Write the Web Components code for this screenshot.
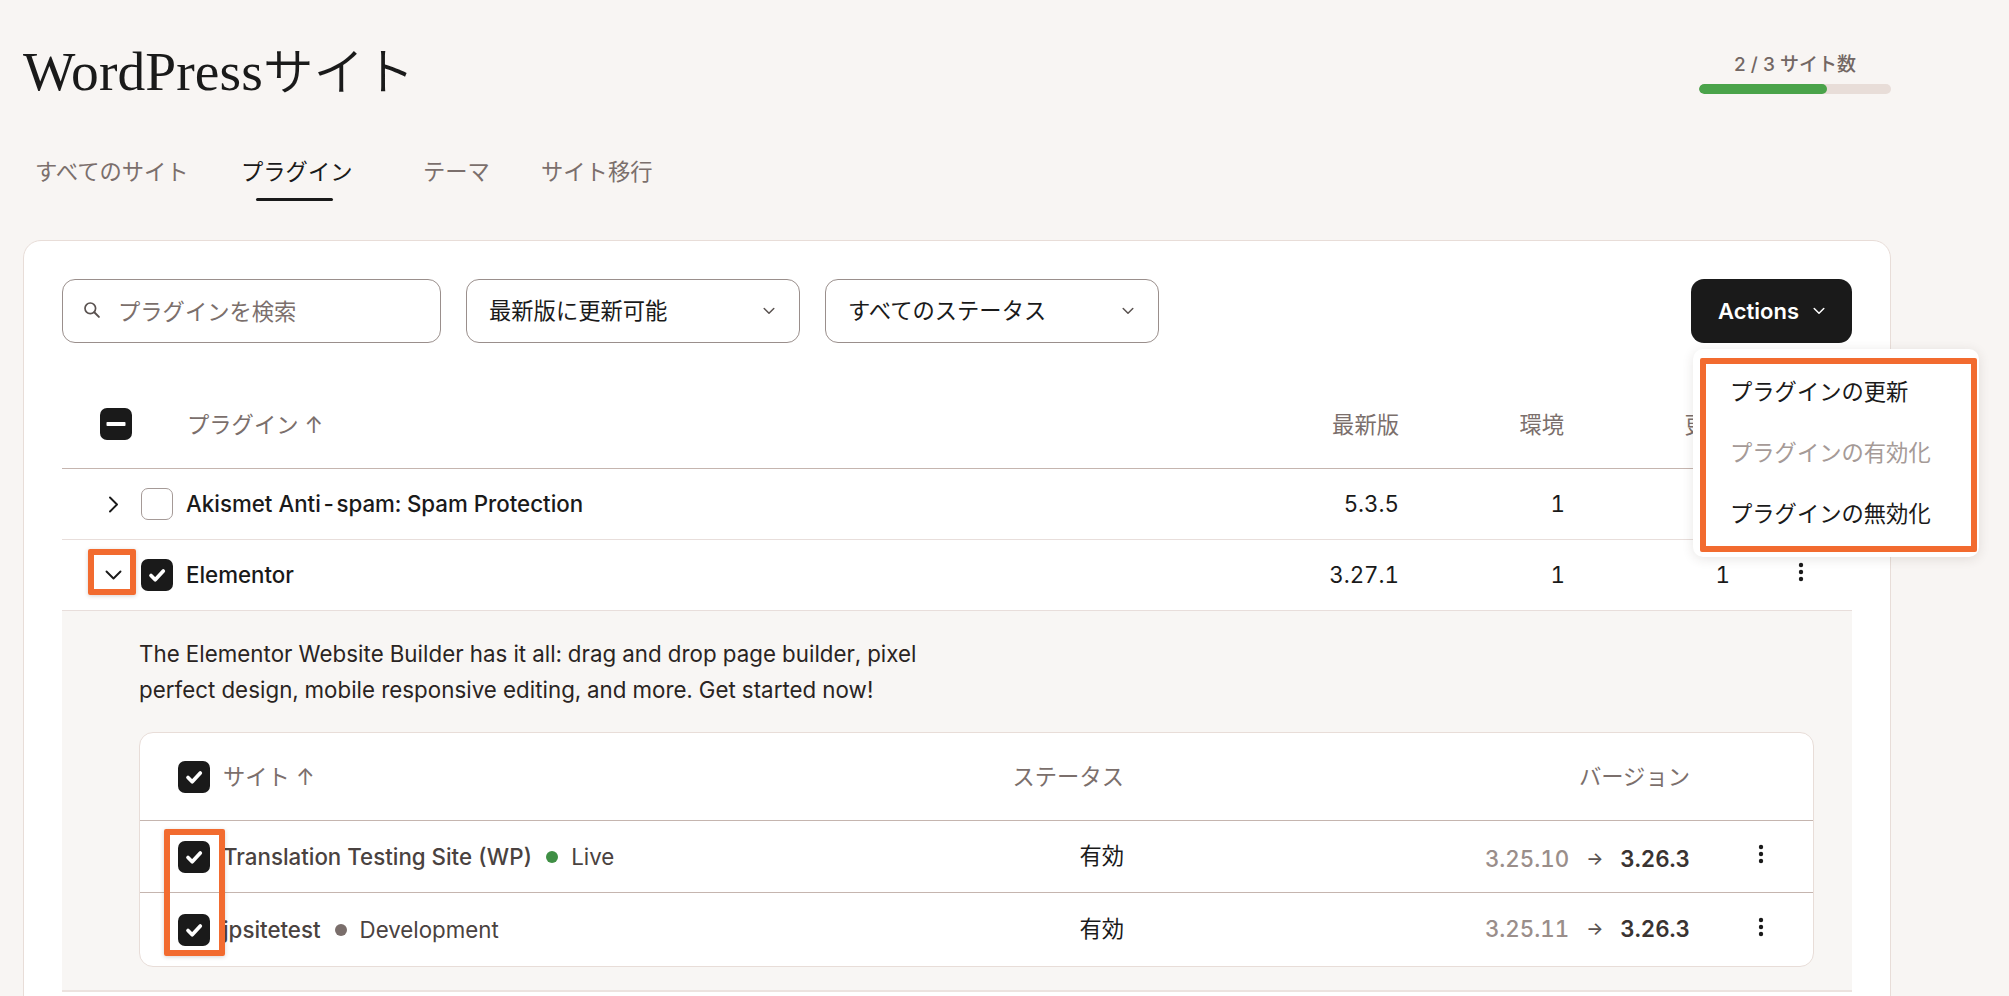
<!DOCTYPE html>
<html lang="ja"><head><meta charset="utf-8"><title>WordPressサイト</title>
<style>
html,body{margin:0;height:996px;overflow:hidden;background:#f8f5f3}
body{font-family:Inter,"Noto Sans CJK JP",sans-serif;font-size:22.3px;color:#1a1a1a;font-variant-numeric:tabular-nums}
</style></head><body>
<wp-page>
  <page-header title-text="WordPressサイト" usage="2 / 3 サイト数" pct="66.7"></page-header>
  <tab-bar>
    <tab-item style="width:156px">すべてのサイト</tab-item>
    <tab-item active style="width:112px;margin-left:50px">プラグイン</tab-item>
    <tab-item style="width:67px;margin-left:70px">テーマ</tab-item>
    <tab-item style="width:112px;margin-left:51px">サイト移行</tab-item>
  </tab-bar>
  <plugin-card>
    <filter-bar>
      <search-box placeholder="プラグインを検索"></search-box>
      <select-box label="最新版に更新可能"></select-box>
      <select-box label="すべてのステータス"></select-box>
      <actions-menu>
        <menu-item>プラグインの更新</menu-item>
        <menu-item disabled>プラグインの有効化</menu-item>
        <menu-item>プラグインの無効化</menu-item>
      </actions-menu>
    </filter-bar>
    <plugin-head></plugin-head>
    <plugin-row name="Akismet Anti-spam: Spam Protection" version="5.3.5" envs="1" updates="1"></plugin-row>
    <plugin-row name="Elementor" version="3.27.1" envs="1" updates="1" open checked></plugin-row>
    <expanded-panel>
      <span slot="desc">The Elementor Website Builder has it all: drag and drop page builder, pixel<br>perfect design, mobile responsive editing, and more. Get started now!</span>
      <site-table>
        <site-row name="Translation Testing Site (WP)" env="Live" dot="#3f8f45" from="3.25.10" to="3.26.3" vy="4"></site-row>
        <site-row name="jpsitetest" env="Development" dot="#7a6e6b" from="3.25.11" to="3.26.3" vy="-2"></site-row>
      </site-table>
    </expanded-panel>
  </plugin-card>
</wp-page>
<script>
const ICON={
 check:'<svg width="32" height="32" viewBox="0 0 32 32"><path d="M10 16.5l4.2 4.2L22.3 12" fill="none" stroke="#fff" stroke-width="3.7" stroke-linecap="round" stroke-linejoin="round"/></svg>',
 minus:'<svg width="32" height="32" viewBox="0 0 32 32"><rect x="6.5" y="14" width="19" height="4" rx=".8" fill="#fff"/></svg>',
 right:'<svg width="11" height="17" viewBox="0 0 11 17"><path d="M2 1.5l7 7-7 7" fill="none" stroke="#1a1a1a" stroke-width="1.9" stroke-linecap="round" stroke-linejoin="round"/></svg>',
 down:'<svg width="17" height="10" viewBox="0 0 17 10"><path d="M1.5 1.5l7 7 7-7" fill="none" stroke="#1a1a1a" stroke-width="1.9" stroke-linecap="round" stroke-linejoin="round"/></svg>',
 kebab:'<svg width="6" height="20" viewBox="0 0 6 20"><circle cx="3" cy="3" r="2.2" fill="#1a1a1a"/><circle cx="3" cy="10" r="2.2" fill="#1a1a1a"/><circle cx="3" cy="17" r="2.2" fill="#1a1a1a"/></svg>',
 chev:c=>`<svg width="12" height="8" viewBox="0 0 12 8"><path d="M1.2 1.5L6 6.2l4.8-4.7" fill="none" stroke="${c}" stroke-width="1.5" stroke-linecap="round" stroke-linejoin="round"/></svg>`,
 search:'<svg width="18" height="18" viewBox="0 0 18 18"><circle cx="7.3" cy="7.3" r="5.3" fill="none" stroke="#5a5250" stroke-width="1.7"/><path d="M11.3 11.3l4.6 4.6" stroke="#5a5250" stroke-width="2" stroke-linecap="round"/></svg>'
};
function def(tag,css,render){
  customElements.define(tag,class extends HTMLElement{
    connectedCallback(){
      if(this.shadowRoot)return;
      const a=n=>this.getAttribute(n);
      this.attachShadow({mode:'open'}).innerHTML=`<style>${css}</style>`+render(a,this);
    }
  });
}
def('wp-page',':host{display:block;padding:0 118px 0 23px;height:996px;box-sizing:border-box}',()=>'<slot></slot>');
def('page-header',`:host{display:flex;justify-content:space-between;height:140px}
 h1{margin:0;padding-top:35px;font:400 55.5px/66px "Liberation Serif","Noto Sans CJK JP",serif;letter-spacing:.1px;color:#1a1a1a}
 h1 span{font-size:50.5px;letter-spacing:0;font-weight:350;font-family:"Noto Sans CJK JP",sans-serif}
 .u{width:192px;padding-top:52px}
 .t{text-align:center;font:500 19px/26px Inter,"Noto Sans CJK JP",sans-serif;color:#736764;height:32px}
 .b{height:10px;border-radius:5px;background:#e8ddd8;overflow:hidden}
 .f{height:100%;background:#4aa34a;border-radius:5px}`,
 a=>{const t=a('title-text');return `<h1>${t.slice(0,9)}<span>${t.slice(9)}</span></h1><div class="u"><div class="t">${a('usage')}</div><div class="b"><div class="f" style="width:${a('pct')}%"></div></div></div>`});
def('tab-bar',':host{display:flex;height:61px;margin-bottom:39px;padding-left:12px}',()=>'<slot></slot>');
def('tab-item',`:host{display:block;position:relative;height:61px;white-space:nowrap;font:400 22.3px/64px Inter,"Noto Sans CJK JP",sans-serif;color:#7b6f6c}
 :host([active]){color:#1a1a1a}
 :host([active]) i{display:block;position:absolute;left:15px;width:77px;bottom:0;height:3px;background:#1a1a1a;border-radius:2px}`,()=>'<slot></slot><i></i>');
def('plugin-card',`:host{display:block;box-sizing:border-box;background:#fff;border:1px solid #e8ddd8;border-radius:18px;padding:38px 38px 60px}`,()=>'<slot></slot>');
def('filter-bar',`:host{display:flex;gap:25px;margin-bottom:37px;height:64px}`,()=>'<slot></slot>');
def('search-box',`:host{display:flex;align-items:center;box-sizing:border-box;width:379px;height:64px;border:1px solid #9a8f8c;border-radius:13px;padding:0 0 2px 20px;gap:17px;color:#7b6f6c}
 svg{flex:none}`,a=>ICON.search+`<span>${a('placeholder')}</span>`);
def('select-box',`:host{display:flex;align-items:center;justify-content:space-between;box-sizing:border-box;width:334px;height:64px;border:1px solid #9a8f8c;border-radius:13px;padding:0 24px 0 22px;color:#1a1a1a}
 span{margin-bottom:4px}`,a=>`<span>${a('label')}</span>`+ICON.chev('#5a5250'));
def('actions-menu',`:host{display:block;position:relative;margin-left:auto;width:161px;height:64px}
 button{all:unset;box-sizing:border-box;display:flex;align-items:center;justify-content:center;gap:14px;width:161px;height:64px;background:#1a1a1a;color:#fff;border-radius:13px;font:600 22px Inter,sans-serif}
 .m{position:absolute;top:70px;left:2px;width:286px;height:208px;box-sizing:border-box;background:#fff;border-radius:10px;box-shadow:0 2px 12px rgba(60,40,30,.12);padding:9px 2px 5px 7px}
 .o{box-sizing:border-box;height:194px;border:6px solid #f26b2f;border-radius:2px;padding:0 0 0 24px;display:flex;flex-direction:column}`,
 ()=>`<button>Actions ${ICON.chev('#fff')}</button><div class="m"><div class="o"><slot></slot></div></div>`);
def('menu-item',`:host{display:block;flex:none;height:61px;font:400 22.3px/56px Inter,"Noto Sans CJK JP",sans-serif;color:#1a1a1a;white-space:nowrap}
 :host([disabled]){color:#a59a97}`,()=>'<slot></slot>');
def('check-box',`:host{display:block;box-sizing:border-box;width:32px;height:32px;border-radius:7px;background:#1a1a1a;flex:none}
 :host([empty]){background:#fff;border:1px solid #a59a97}svg{display:block}
 :host([empty]) svg{display:none}`,(a,e)=>e.hasAttribute('minus')?ICON.minus:ICON.check);
const grid='display:grid;grid-template-columns:125px 1fr 150px 165px 165px 123px;align-items:center;box-sizing:border-box;';
def('plugin-head',`:host{${grid}height:89px;border-bottom:1px solid #c5b5af;color:#7b6f6c;padding-bottom:2px}
 .l{padding-left:38px;margin-bottom:-2px}.r{text-align:right}`,
 ()=>`<div class="l"><check-box minus></check-box></div><div>プラグイン ↑</div><div class="r">最新版</div><div class="r">環境</div><div class="r">更新</div><div></div>`);
def('plugin-row',`:host{${grid}height:71px;border-bottom:1px solid #e8dedb}
 .l{position:relative;display:flex;align-items:center;height:100%}
 .c{width:32px;margin-left:35px;margin-right:12px;display:flex;justify-content:center}
 .n{font-weight:500;margin:0 0 2px -1px}.n span{margin:0 .6px}.r{text-align:right;margin-bottom:2px}.s{margin-right:-1px}.k{padding-left:69px;margin-top:-6px;display:flex}
 .h{position:absolute;left:26px;top:9px;width:48px;height:46px;box-sizing:border-box;border:6px solid #f26b2f;border-radius:2px;box-shadow:0 1px 4px rgba(60,40,30,.2)}`,
 (a,e)=>{const o=e.hasAttribute('open');return `<div class="l"><span class="c">${o?ICON.down:ICON.right}</span><check-box ${e.hasAttribute('checked')?'':'empty'}></check-box>${o?'<i class="h"></i>':''}</div><div class="n">${a('name').replace('-','<span>-</span>')}</div><div class="r">${a('version')}</div><div class="r s">${a('envs')}</div><div class="r s">${a('updates')}</div><div class="k">${ICON.kebab}</div>`});
def('expanded-panel',`:host{display:block;background:#f8f6f4;padding:25px 38px 0 77px;border-bottom:2px solid #ece3df;height:381px;box-sizing:border-box}
 .d{line-height:36px;margin-bottom:24px;color:#2a2422;letter-spacing:.05px}`,()=>'<div class="d"><slot name="desc"></slot></div><slot></slot>');
const sgrid='display:grid;grid-template-columns:84px 700px 200px 566px 123px;align-items:center;box-sizing:border-box;';
def('site-table',`:host{display:block;position:relative;background:#fff;border:1px solid #e8ddd8;border-radius:14px}
 .h{${sgrid}height:88px;border-bottom:1px solid #c5b5af;color:#7b6f6c;padding-bottom:3px}
 .l{padding-left:38px;margin-bottom:-3px}.r{text-align:right}.t{margin-left:-1px}
 .o{position:absolute;left:24px;top:96px;width:61px;height:127px;box-sizing:border-box;border:6px solid #f26b2f;border-radius:2px;box-shadow:0 1px 4px rgba(60,40,30,.2);pointer-events:none}`,
 ()=>`<div class="h"><div class="l"><check-box></check-box></div><div class="t">サイト ↑</div><div class="r">ステータス</div><div class="r">バージョン</div><div></div></div><slot></slot><i class="o"></i>`);
def('site-row',`:host{${sgrid}height:72px;border-bottom:1px solid #c5b5af}
 :host(:last-child){border-bottom:0;height:73px}
 .l{padding-left:38px}.r{text-align:right;margin-bottom:6px}
 .n{display:flex;align-items:center;color:#4a4240;white-space:nowrap;margin-left:-1px}.n b{font-weight:500}
 .d{width:12px;height:12px;border-radius:50%;margin:0 13px 0 14px}
 .v{font-weight:500;color:#9a8e8a;display:flex;justify-content:flex-end;align-items:center;gap:17px}
 .v b{font-weight:600;color:#3a3331}.v i{font-style:normal;font-size:18px;color:#5a5250}
 .k{padding-left:68px;display:flex;margin-top:-6px}`,
 a=>`<div class="l"><check-box></check-box></div><div class="n"><b>${a('name')}</b><span class="d" style="background:${a('dot')}"></span>${a('env')}</div><div class="r">有効</div><div class="v" style="margin-top:${a('vy')}px"><span>${a('from')}</span><i>→</i><b>${a('to')}</b></div><div class="k">${ICON.kebab}</div>`);
</script>
</body></html>
